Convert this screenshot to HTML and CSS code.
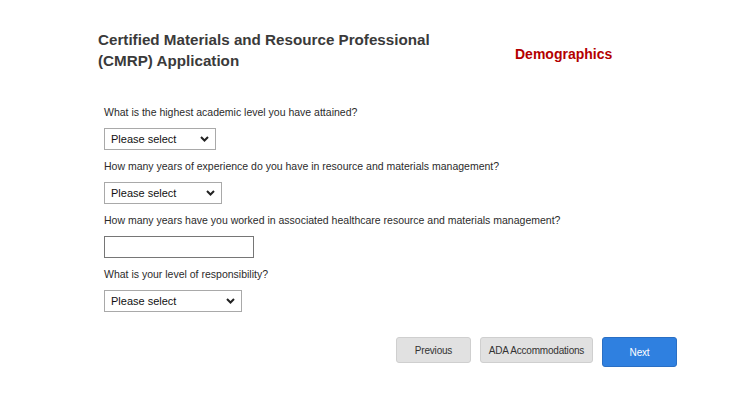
FILE: index.html
```html
<!DOCTYPE html>
<html>
<head>
  <meta charset="utf-8">
  <meta name="viewport" content="width=device-width, initial-scale=1">
  <title>CMRP Application - Demographics</title>
  <link rel="stylesheet" href="styles.css">
</head>
<body>
  <div class="page">
    <div class="header">
      <h1>Certified Materials and Resource Professional (CMRP) Application</h1>
      <div class="step-title">Demographics</div>
    </div>

    <form class="form">
      <div class="field">
        <label>What is the highest academic level you have attained?</label>
        <div class="select-wrap w-academic">
          <select><option>Please select</option></select>
          <svg class="chev" width="9" height="6" viewBox="0 0 9 6"><path d="M1 1 L4.5 4.5 L8 1" fill="none" stroke="#222" stroke-width="2"/></svg>
        </div>
      </div>

      <div class="field">
        <label>How many years of experience do you have in resource and materials management?</label>
        <div class="select-wrap w-experience">
          <select><option>Please select</option></select>
          <svg class="chev" width="9" height="6" viewBox="0 0 9 6"><path d="M1 1 L4.5 4.5 L8 1" fill="none" stroke="#222" stroke-width="2"/></svg>
        </div>
      </div>

      <div class="field">
        <label>How many years have you worked in associated healthcare resource and materials management?</label>
        <input type="text" class="text-input">
      </div>

      <div class="field">
        <label>What is your level of responsibility?</label>
        <div class="select-wrap w-responsibility">
          <select><option>Please select</option></select>
          <svg class="chev" width="9" height="6" viewBox="0 0 9 6"><path d="M1 1 L4.5 4.5 L8 1" fill="none" stroke="#222" stroke-width="2"/></svg>
        </div>
      </div>

      <div class="actions">
        <button type="button" class="btn btn-grey btn-prev">Previous</button>
        <button type="button" class="btn btn-grey btn-ada">ADA Accommodations</button>
        <button type="button" class="btn btn-blue">Next</button>
      </div>
    </form>
  </div>
</body>
</html>
```

FILE: styles.css
```css
body {
  font-family: "Liberation Sans", Arial, sans-serif;
  margin: 0;
  background-color: #fff;
  color: #333;
}
.page {
  width: 579px;
  padding: 29px 0 0 98px;
}
.header {
  display: flex;
  align-items: flex-start;
}
h1 {
  width: 340px;
  margin: 0;
  font-size: 15.2px;
  line-height: 21px;
  font-weight: bold;
  color: #3a3a3a;
}
.step-title {
  margin: 17px 0 0 77px;
  font-size: 14px;
  line-height: 16px;
  font-weight: bold;
  color: #b30000;
}
.form {
  margin-top: 34px;
  padding-left: 6px;
}
.field {
  display: flex;
  flex-direction: column;
  align-items: flex-start;
  gap: 9px;
  margin-bottom: 9px;
}
label {
  font-size: 10.5px;
  line-height: 14px;
  color: #2b2b2b;
}
.select-wrap {
  position: relative;
  height: 22px;
}
.w-academic { width: 112px; }
.w-experience { width: 118px; }
.w-responsibility { width: 138px; }
select {
  -webkit-appearance: none;
  appearance: none;
  width: 100%;
  height: 22px;
  margin: 0;
  padding: 0 0 0 6px;
  border: 1px solid #a9a9a9;
  border-radius: 0;
  background-color: #fff;
  font-family: "Liberation Sans", Arial, sans-serif;
  font-size: 11px;
  color: #111;
}
.chev {
  position: absolute;
  right: 7px;
  top: 8px;
  pointer-events: none;
}
.text-input {
  box-sizing: border-box;
  width: 150px;
  height: 22px;
  margin: 0;
  border: 1px solid #767676;
  border-radius: 0;
  padding: 0 4px;
}
.actions {
  display: flex;
  justify-content: flex-end;
  align-items: flex-start;
  gap: 9px;
  margin-top: 25px;
}
.btn {
  box-sizing: border-box;
  height: 26px;
  border-radius: 3px;
  font-family: "Liberation Sans", Arial, sans-serif;
  font-size: 10px;
  letter-spacing: -0.2px;
  cursor: pointer;
}
.btn-grey {
  background-color: #e1e1e1;
  border: 1px solid #cfcfcf;
  color: #333;
}
.btn-prev { width: 75px; }
.btn-ada { width: 113px; }
.btn-blue {
  width: 75px;
  height: 30px;
  background-color: #2f80e0;
  border: 1px solid #2a6fc4;
  color: #fff;
}
.btn-blue:hover {
  background-color: #256fc8;
}
```
